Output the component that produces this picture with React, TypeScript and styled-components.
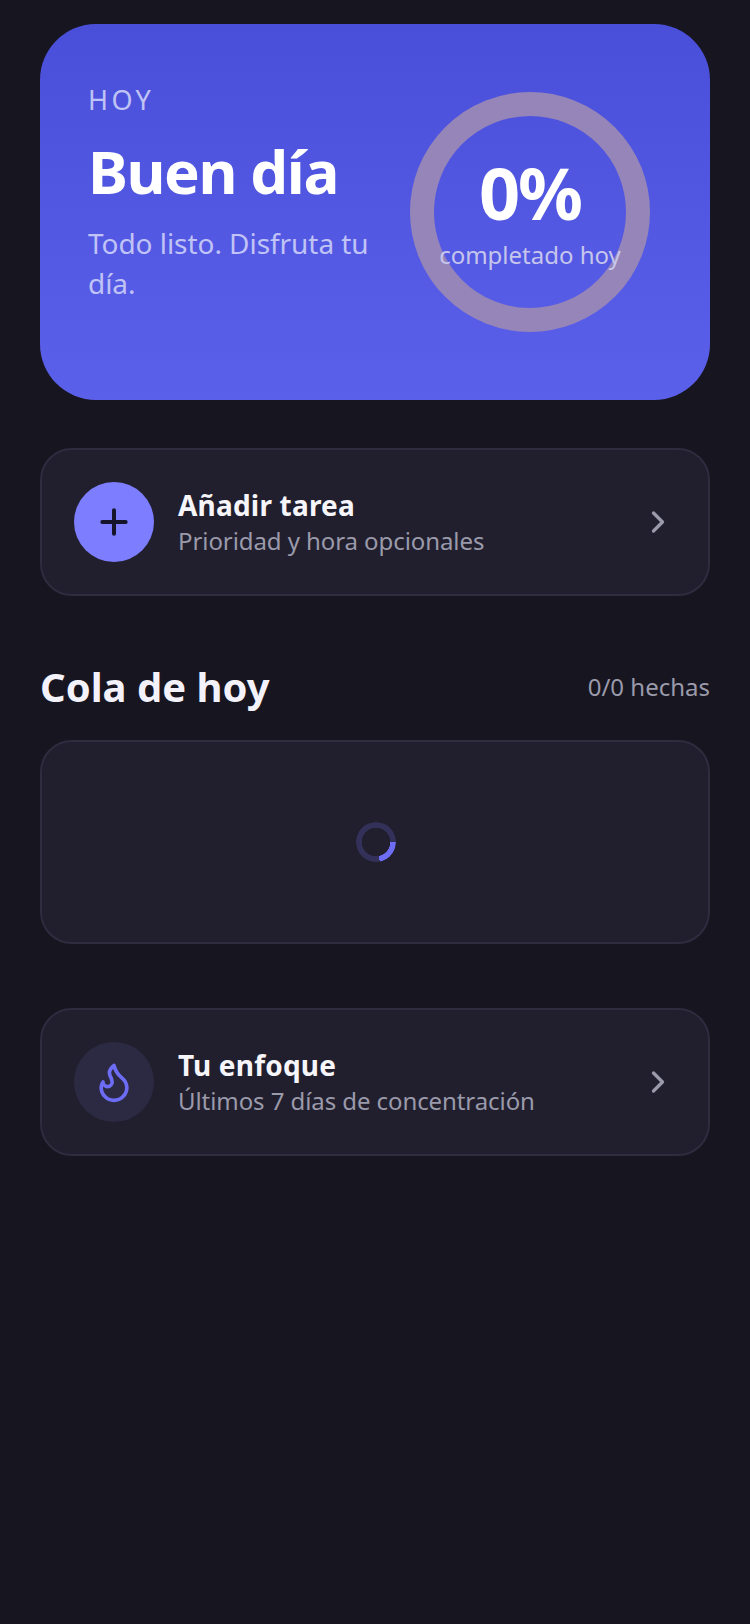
import React from 'react';
import styled, { createGlobalStyle } from 'styled-components';
import { ChevronRight, Flame, Plus } from 'lucide-react';

const GlobalStyle = createGlobalStyle`
  html, body {
    margin: 0;
    background: #171520;
    font-family: "Noto Sans", "Open Sans", sans-serif;
  }
  * {
    box-sizing: border-box;
  }
`;

function App() {
  return (
    <Screen>
      <GlobalStyle />
      <Hero>
        <HeroText>
          <Eyebrow>HOY</Eyebrow>
          <Greeting>Buen día</Greeting>
          <HeroNote>Todo listo. Disfruta tu día.</HeroNote>
        </HeroText>
        <Ring>
          <Percent>0%</Percent>
          <RingLabel>completado hoy</RingLabel>
        </Ring>
      </Hero>

      <ActionCard>
        <IconCircle $accent>
          <Plus size={40} strokeWidth={2.4} color="#16142a" />
        </IconCircle>
        <ActionText>
          <ActionTitle>Añadir tarea</ActionTitle>
          <ActionNote>Prioridad y hora opcionales</ActionNote>
        </ActionText>
        <Arrow size={36} strokeWidth={2.2} />
      </ActionCard>

      <SectionHeader>
        <SectionTitle>Cola de hoy</SectionTitle>
        <SectionCount>0/0 hechas</SectionCount>
      </SectionHeader>

      <LoadingCard>
        <Spinner />
      </LoadingCard>

      <FocusCard>
        <IconCircle>
          <Flame size={44} strokeWidth={2} color="#6c6cf5" />
        </IconCircle>
        <ActionText>
          <ActionTitle>Tu enfoque</ActionTitle>
          <ActionNote>Últimos 7 días de concentración</ActionNote>
        </ActionText>
        <Arrow size={36} strokeWidth={2.2} />
      </FocusCard>
    </Screen>
  );
}

const Screen = styled.main`
  min-height: 1624px;
  padding: 24px 40px 0;
  display: flex;
  flex-direction: column;
  background: #171520;
`;

const Hero = styled.section`
  height: 376px;
  padding: 0 60px 0 48px;
  display: flex;
  align-items: center;
  justify-content: space-between;
  border-radius: 56px;
  background: linear-gradient(180deg, #4a4fda 0%, #5b60ea 100%);
`;

const HeroText = styled.div`
  width: 290px;
  padding-bottom: 40px;
  display: flex;
  flex-direction: column;
`;

const Eyebrow = styled.span`
  font-size: 27px;
  line-height: 36px;
  letter-spacing: 3.4px;
  color: #c0c3f5;
`;

const Greeting = styled.h1`
  margin: 17px 0 16px;
  font-size: 60px;
  line-height: 72px;
  font-weight: 700;
  letter-spacing: -1.4px;
  color: #ffffff;
`;

const HeroNote = styled.p`
  margin: 0;
  font-size: 28px;
  line-height: 40px;
  letter-spacing: -0.05px;
  color: #c0c3f5;
`;

const Ring = styled.div`
  width: 240px;
  height: 240px;
  flex-shrink: 0;
  display: flex;
  flex-direction: column;
  align-items: center;
  justify-content: center;
  border: 24px solid #9585b8;
  border-radius: 50%;
`;

const Percent = styled.span`
  margin-top: -3px;
  font-size: 72px;
  line-height: 84px;
  font-weight: 700;
  letter-spacing: -2px;
  color: #ffffff;
`;

const RingLabel = styled.span`
  margin-top: 5px;
  font-size: 24px;
  line-height: 32px;
  white-space: nowrap;
  color: #c6c6ec;
`;

const ActionCard = styled.button`
  width: 100%;
  height: 148px;
  margin-top: 48px;
  padding: 0 32px;
  display: flex;
  align-items: center;
  gap: 24px;
  text-align: left;
  font-family: inherit;
  border: 2px solid #2e2c3e;
  border-radius: 32px;
  background: #211f2e;
`;

const FocusCard = styled(ActionCard)`
  margin-top: 64px;
`;

const IconCircle = styled.span<{ $accent?: boolean }>`
  width: 80px;
  height: 80px;
  flex-shrink: 0;
  display: flex;
  align-items: center;
  justify-content: center;
  border-radius: 50%;
  background: ${(p) => (p.$accent ? '#7c7eff' : '#2c2a42')};
`;

const ActionText = styled.span`
  flex: 1;
  display: flex;
  flex-direction: column;
`;

const ActionTitle = styled.span`
  font-size: 28px;
  line-height: 36px;
  font-weight: 700;
  letter-spacing: 0.2px;
  color: #f5f5fa;
`;

const ActionNote = styled.span`
  margin-top: 1px;
  font-size: 24px;
  line-height: 34px;
  letter-spacing: -0.08px;
  color: #9a9aaa;
`;

const Arrow = styled(ChevronRight)`
  flex-shrink: 0;
  color: #9a9aaa;
`;

const SectionHeader = styled.header`
  margin-top: 64px;
  height: 54px;
  margin-bottom: 2px;
  display: flex;
  align-items: center;
  justify-content: space-between;
`;

const SectionTitle = styled.h2`
  margin: 0;
  font-size: 40px;
  line-height: 56px;
  font-weight: 700;
  color: #f3f2fb;
`;

const SectionCount = styled.span`
  font-size: 24px;
  line-height: 34px;
  color: #9a9aaa;
`;

const LoadingCard = styled.div`
  height: 204px;
  margin-top: 24px;
  display: flex;
  align-items: center;
  justify-content: center;
  border: 2px solid #2e2c3e;
  border-radius: 32px;
  background: #211f2e;
`;

const Spinner = styled.div`
  width: 40px;
  height: 40px;
  margin-left: 2px;
  border-radius: 50%;
  background: conic-gradient(#6c6cf5 0 22%, #33315a 22% 100%);
  mask: radial-gradient(circle, transparent 14px, #000 14.5px);
  transform: rotate(90deg);
`;

export default App;
